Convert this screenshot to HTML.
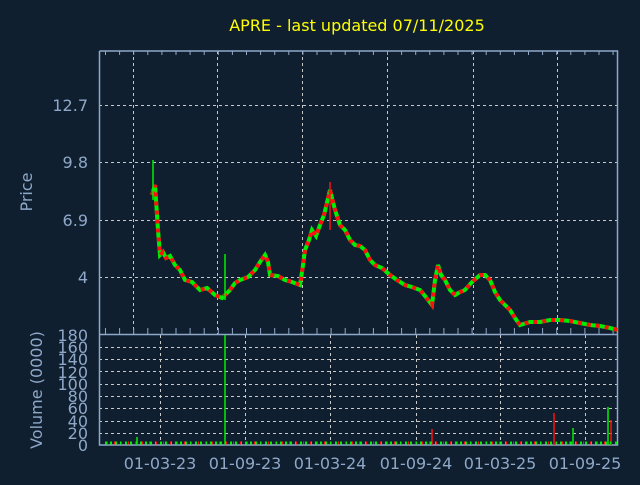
<!DOCTYPE html>
<html><head><style>
body{margin:0;background:#0f1f30;width:640px;height:480px;overflow:hidden}
</style></head><body>
<svg width="640" height="480" xmlns="http://www.w3.org/2000/svg" font-family="DejaVu Sans, sans-serif">
<rect width="640" height="480" fill="#0f1f30"/>
<text x="357" y="31" fill="#ffff00" font-size="16" text-anchor="middle">APRE - last updated 07/11/2025</text>
<g stroke="#c8c8c8" stroke-dasharray="3,3" stroke-width="1">
<line x1="133.5" y1="51" x2="133.5" y2="334"/><line x1="217.5" y1="51" x2="217.5" y2="334"/>
<line x1="302.5" y1="51" x2="302.5" y2="334"/><line x1="387.5" y1="51" x2="387.5" y2="334"/>
<line x1="473.5" y1="51" x2="473.5" y2="334"/><line x1="557.5" y1="51" x2="557.5" y2="334"/>
<line x1="99" y1="105.5" x2="617" y2="105.5"/><line x1="99" y1="162.5" x2="617" y2="162.5"/>
<line x1="99" y1="220.5" x2="617" y2="220.5"/><line x1="99" y1="277.5" x2="617" y2="277.5"/>
<line x1="160.5" y1="335" x2="160.5" y2="445"/><line x1="245.5" y1="335" x2="245.5" y2="445"/>
<line x1="330.5" y1="335" x2="330.5" y2="445"/><line x1="416.5" y1="335" x2="416.5" y2="445"/>
<line x1="500.5" y1="335" x2="500.5" y2="445"/><line x1="585.5" y1="335" x2="585.5" y2="445"/>
<line x1="99" y1="347.5" x2="617" y2="347.5"/><line x1="99" y1="359.5" x2="617" y2="359.5"/>
<line x1="99" y1="371.5" x2="617" y2="371.5"/><line x1="99" y1="384.5" x2="617" y2="384.5"/>
<line x1="99" y1="396.5" x2="617" y2="396.5"/><line x1="99" y1="408.5" x2="617" y2="408.5"/>
<line x1="99" y1="421.5" x2="617" y2="421.5"/><line x1="99" y1="433.5" x2="617" y2="433.5"/>
</g>
<g stroke="#8fa8c8" stroke-width="1.5" fill="none">
<path d="M99.5 51 V445 H617.5 V51 H99.5"/><line x1="99" y1="334.5" x2="617" y2="334.5"/>
<line x1="105" y1="53" x2="617" y2="53" stroke-width="4" stroke-dasharray="1,13.1"/>
<line x1="105" y1="331" x2="617" y2="331" stroke-width="6" stroke-dasharray="1,13.1"/>
</g>
<polyline fill="none" stroke="#00ee00" stroke-width="4" stroke-linejoin="miter" points="152,195 155,185 158,230 160,255 163,252 166,258 170,256 175,265 180,270 185,280 192,282 200,290 207,288 215,295 222,298 226,294 230,290 235,283 240,280 248,277 255,270 260,262 265,255 268,262 270,275 278,276 285,280 292,282 300,285 303,265 305,250 309,240 312,230 316,236 320,225 324,215 330,190 333,202 335,210 340,225 345,230 350,240 355,245 360,246 365,250 370,260 375,265 382,268 390,275 397,280 405,285 412,287 420,290 425,296 432,305 435,280 438,265 441,275 445,280 450,290 455,295 460,292 465,290 472,282 480,275 485,275 490,280 495,292 500,300 505,305 510,310 515,318 520,325 530,322 540,322 550,320 560,320 570,321 580,323 590,325 600,326 610,328 618,330"/>
<polyline fill="none" stroke="#ff1010" stroke-width="4" stroke-dasharray="4,5" stroke-linejoin="miter" points="152,195 155,185 158,230 160,255 163,252 166,258 170,256 175,265 180,270 185,280 192,282 200,290 207,288 215,295 222,298 226,294 230,290 235,283 240,280 248,277 255,270 260,262 265,255 268,262 270,275 278,276 285,280 292,282 300,285 303,265 305,250 309,240 312,230 316,236 320,225 324,215 330,190 333,202 335,210 340,225 345,230 350,240 355,245 360,246 365,250 370,260 375,265 382,268 390,275 397,280 405,285 412,287 420,290 425,296 432,305 435,280 438,265 441,275 445,280 450,290 455,295 460,292 465,290 472,282 480,275 485,275 490,280 495,292 500,300 505,305 510,310 515,318 520,325 530,322 540,322 550,320 560,320 570,321 580,323 590,325 600,326 610,328 618,330"/>
<g stroke-width="1.5">
<line x1="153" y1="160" x2="153" y2="200" stroke="#00ee00"/>
<line x1="330" y1="182" x2="330" y2="230" stroke="#ff1010"/>
<line x1="225" y1="254" x2="225" y2="300" stroke="#00ee00"/>
<line x1="225" y1="335" x2="225" y2="445" stroke="#00ee00"/>
<line x1="554" y1="413" x2="554" y2="445" stroke="#ff1010"/>
<line x1="608" y1="407" x2="608" y2="445" stroke="#00ee00"/>
<line x1="611" y1="420" x2="611" y2="445" stroke="#ff1010"/>
<line x1="432" y1="429" x2="432" y2="445" stroke="#ff1010"/>
<line x1="573" y1="428" x2="573" y2="445" stroke="#00ee00"/>
<line x1="137" y1="437" x2="137" y2="445" stroke="#00ee00"/>
</g>
<path d="M105 443 h512" stroke="#00ee00" stroke-width="3" stroke-dasharray="2,3"/>
<path d="M107 443 h510" stroke="#ff1010" stroke-width="3" stroke-dasharray="1,6"/>
<g fill="#8fa8c8" font-size="16">
<text x="88" y="111" text-anchor="end">12.7</text><text x="88" y="168" text-anchor="end">9.8</text>
<text x="88" y="226" text-anchor="end">6.9</text><text x="88" y="283" text-anchor="end">4</text>
<text x="88" y="341" text-anchor="end">180</text><text x="88" y="353" text-anchor="end">160</text>
<text x="88" y="365" text-anchor="end">140</text><text x="88" y="378" text-anchor="end">120</text>
<text x="88" y="390" text-anchor="end">100</text><text x="88" y="402" text-anchor="end">80</text>
<text x="88" y="414" text-anchor="end">60</text><text x="88" y="427" text-anchor="end">40</text>
<text x="88" y="439" text-anchor="end">20</text><text x="88" y="451" text-anchor="end">0</text>
<text x="160" y="469" text-anchor="middle">01-03-23</text><text x="245" y="469" text-anchor="middle">01-09-23</text>
<text x="330" y="469" text-anchor="middle">01-03-24</text><text x="416" y="469" text-anchor="middle">01-09-24</text>
<text x="500" y="469" text-anchor="middle">01-03-25</text><text x="585" y="469" text-anchor="middle">01-09-25</text>
<text transform="translate(32,192) rotate(-90)" text-anchor="middle">Price</text>
<text transform="translate(42,390) rotate(-90)" text-anchor="middle">Volume (0000)</text>
</g>
</svg>
</body></html>
